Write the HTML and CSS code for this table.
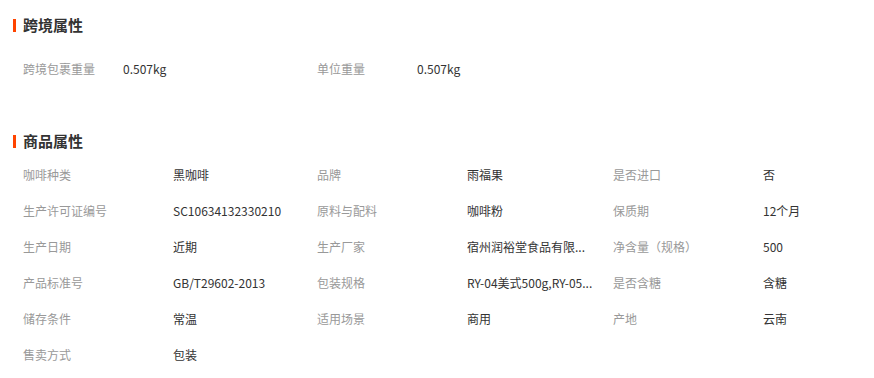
FILE: index.html
```html
<!DOCTYPE html>
<html lang="zh-CN">
<head>
<meta charset="utf-8">
<link rel="stylesheet" href="styles.css">
</head>
<body>
<section class="block block-cross">
  <h2 class="title">跨境属性</h2>
  <div class="grid cross">
    <div class="item"><span class="label">跨境包裹重量</span><span class="value">0.507kg</span></div>
    <div class="item"><span class="label">单位重量</span><span class="value">0.507kg</span></div>
  </div>
</section>
<section class="block block-goods">
  <h2 class="title">商品属性</h2>
  <div class="grid goods">
    <div class="item"><span class="label">咖啡种类</span><span class="value">黑咖啡</span></div>
    <div class="item"><span class="label">品牌</span><span class="value">雨福果</span></div>
    <div class="item"><span class="label">是否进口</span><span class="value">否</span></div>
    <div class="item"><span class="label">生产许可证编号</span><span class="value">SC10634132330210</span></div>
    <div class="item"><span class="label">原料与配料</span><span class="value">咖啡粉</span></div>
    <div class="item"><span class="label">保质期</span><span class="value">12个月</span></div>
    <div class="item"><span class="label">生产日期</span><span class="value">近期</span></div>
    <div class="item"><span class="label">生产厂家</span><span class="value">宿州润裕堂食品有限...</span></div>
    <div class="item"><span class="label">净含量（规格）</span><span class="value">500</span></div>
    <div class="item"><span class="label">产品标准号</span><span class="value">GB/T29602-2013</span></div>
    <div class="item"><span class="label">包装规格</span><span class="value">RY-04美式500g,RY-05...</span></div>
    <div class="item"><span class="label">是否含糖</span><span class="value">含糖</span></div>
    <div class="item"><span class="label">储存条件</span><span class="value">常温</span></div>
    <div class="item"><span class="label">适用场景</span><span class="value">商用</span></div>
    <div class="item"><span class="label">产地</span><span class="value">云南</span></div>
    <div class="item"><span class="label">售卖方式</span><span class="value">包装</span></div>
  </div>
</section>
</body>
</html>
```
FILE: styles.css
```css
html, body {
  margin: 0;
  padding: 0;
  background: #fff;
}
body {
  font-family: "Noto Sans CJK SC", "Noto Sans", sans-serif;
  font-size: 12px;
  color: #333;
}
.block {
  padding-left: 13px;
}
.block-cross {
  padding-top: 15px;
}
.block-goods {
  padding-top: 45px;
}
.title {
  margin: 0;
  height: 20px;
  line-height: 20px;
  font-size: 15px;
  font-weight: bold;
  color: #333;
  display: flex;
  align-items: center;
  gap: 7px;
}
.title::before {
  content: "";
  display: block;
  width: 3px;
  height: 13px;
  background: #ff4400;
}
.grid {
  display: grid;
  padding-left: 10px;
}
.cross {
  margin-top: 15px;
  grid-template-columns: 294px 294px;
}
.goods {
  margin-top: 5px;
  grid-template-columns: 294px 296px 260px;
}
.item {
  display: flex;
  height: 36px;
  align-items: center;
  white-space: nowrap;
}
.label {
  color: #999;
  width: 150px;
  flex: none;
}
.cross .label {
  width: 100px;
}
.value {
  color: #333;
}
```
